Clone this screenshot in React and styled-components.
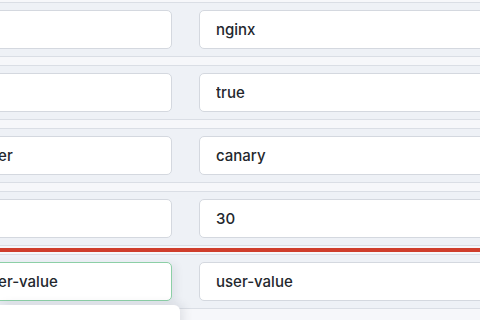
import React from "react";
import styled, { createGlobalStyle } from "styled-components";

const rows = [
  { key: "", value: "nginx" },
  { key: "", value: "true" },
  { key: "user", value: "canary" },
  { key: "", value: "30", dropAfter: true },
  { key: "user-value", value: "user-value", focused: true },
];

export default function App() {
  return (
    <>
      <GlobalStyle />
      <Page>
        <List>
          {rows.map((row, i) => (
            <React.Fragment key={i}>
              <Row>
                <Field $focused={row.focused} defaultValue={row.key} readOnly />
                <Field defaultValue={row.value} readOnly />
              </Row>
              {row.dropAfter ? <DropLine /> : <Gap />}
            </React.Fragment>
          ))}
        </List>
        <Suggestions />
      </Page>
    </>
  );
}

const GlobalStyle = createGlobalStyle`
  html, body {
    margin: 0;
    padding: 0;
    width: 480px;
    height: 320px;
    overflow: hidden;
    background: #f6f7fa;
    font-family: Inter, "Liberation Sans", sans-serif;
  }
`;

const Page = styled.div`
  position: relative;
  width: 480px;
  height: 320px;
  overflow: hidden;
  padding-top: 2px;
  box-sizing: border-box;
`;

const List = styled.div`
  display: flex;
  flex-direction: column;
  width: 580px;
  margin-left: -36px;
`;

const Row = styled.div`
  display: grid;
  grid-template-columns: 208px 1fr;
  column-gap: 27px;
  padding: 7px 0;
  background: #eef1f6;
  border-top: 1px solid #dadee5;
  border-bottom: 1px solid #dadee5;
`;

const Gap = styled.div`
  height: 8px;
`;

const DropLine = styled.div`
  height: 4px;
  margin: 2px 0 2px;
  background: #cf3d2c;
`;

const Field = styled.input`
  box-sizing: border-box;
  height: 39px;
  padding: 0 16px;
  border: 1px solid ${(p) => (p.$focused ? "#8ccfa6" : "#d4d8df")};
  border-radius: 5px;
  background: #fff;
  color: #23272d;
  font-family: Inter, "Liberation Sans", sans-serif;
  font-size: 15px;
  font-weight: 500;
  outline: none;
  box-shadow: ${(p) => (p.$focused ? "4px 2px 8px rgba(40, 50, 70, 0.08)" : "none")};
`;

const Suggestions = styled.div`
  position: absolute;
  left: 0;
  top: 305px;
  width: 180px;
  height: 40px;
  background: #fff;
  border-radius: 0 6px 0 0;
  box-shadow: 4px -1px 10px rgba(40, 50, 70, 0.1);
`;
